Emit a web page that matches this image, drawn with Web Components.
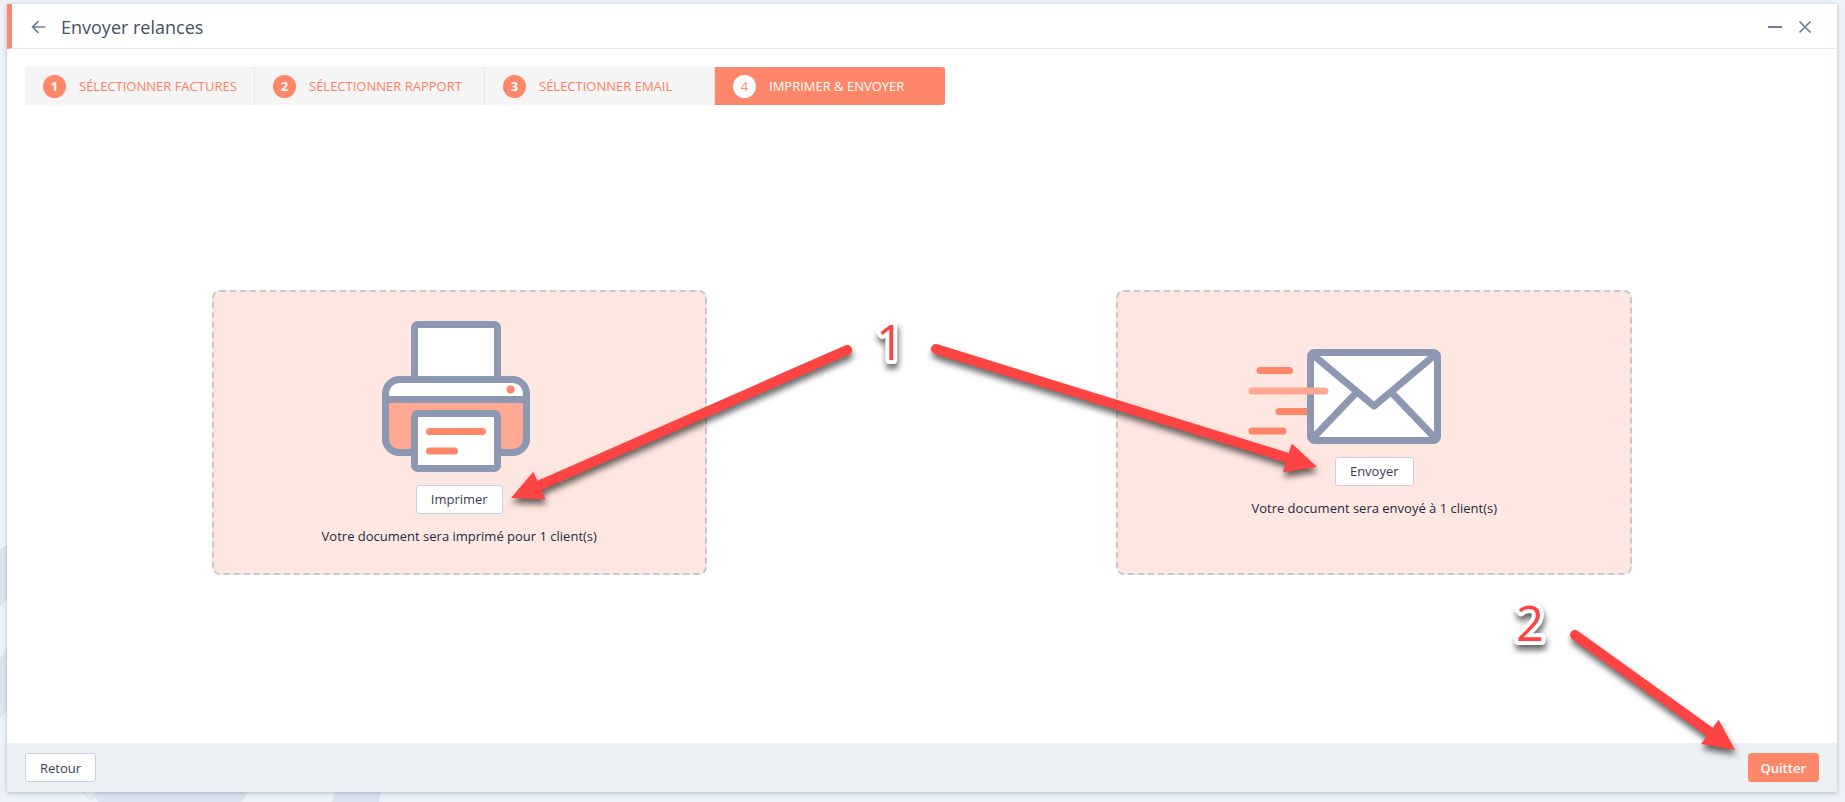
<!DOCTYPE html>
<html lang="fr">
<head>
<meta charset="UTF-8">
<title>Envoyer relances</title>
<style>
  body {
    margin: 0;
    font-family: "Open Sans", "Noto Sans", sans-serif;
    font-size: 13px;
    color: #2f3b52;
    background: #edf2fa;
  }
</style>
</head>
<body>
<relance-app></relance-app>

<script>
/**
 * Button: variants "default" and "primary"
 */
class AppButton extends HTMLElement {
  constructor() {
    super();
    this.attachShadow({ mode: 'open' });
  }

  connectedCallback() {
    this.shadowRoot.innerHTML = `
      <style>
        :host { display: block; }
        button {
          display: block;
          height: 29px;
          padding: 0 14px;
          border: 1px solid #c9d1dc;
          border-radius: 3px;
          background: #fff;
          color: #364155;
          font: 500 13px/20px "Open Sans", "Noto Sans", sans-serif;
          cursor: pointer;
        }
        :host([variant="primary"]) button {
          padding: 0 12px;
          border-color: #ff8769;
          background: #ff8769;
          color: #fff;
          font-weight: 600;
        }
      </style>
      <button type="button"><slot></slot></button>
    `;
  }
}
customElements.define('app-button', AppButton);

/**
 * Title bar
 */
class WindowHeader extends HTMLElement {
  constructor() {
    super();
    this.attachShadow({ mode: 'open' });
  }

  connectedCallback() {
    this.shadowRoot.innerHTML = `
      <style>
        :host {
          display: flex;
          align-items: center;
          box-sizing: border-box;
          height: 45px;
          padding: 2px 25px 0 19px;
          border-bottom: 1px solid #e4e6e8;
          border-left: 5px solid #ff8769;
        }
        h1 { flex: 1; margin: 0 0 0 15px; font-size: 18px; font-weight: 400; color: #445063; }
        button { display: block; padding: 0; border: 0; background: none; cursor: pointer; }
        .minimize { margin-right: 15px; }
        svg { display: block; fill: none; stroke: #6d7d96; stroke-width: 2; }
      </style>
      <button type="button" aria-label="Précédent">
        <svg width="15" height="14" viewBox="0 0 15 14"><path d="M14.5 7H1.5M7.5 1.2L1.6 7l5.9 5.8" stroke-width="1.7"/></svg>
      </button>
      <h1><slot></slot></h1>
      <button class="minimize" type="button" aria-label="Réduire">
        <svg width="15" height="14" viewBox="0 0 15 14"><path d="M0 7h14"/></svg>
      </button>
      <button type="button" aria-label="Fermer">
        <svg width="14" height="14" viewBox="0 0 14 14"><path d="M1.5 1.5l11 11M12.5 1.5l-11 11" stroke-width="1.7"/></svg>
      </button>
    `;
  }
}
customElements.define('window-header', WindowHeader);

/**
 * One step of the wizard
 */
class WizardStep extends HTMLElement {
  constructor() {
    super();
    this.attachShadow({ mode: 'open' });
  }

  connectedCallback() {
    this.shadowRoot.innerHTML = `
      <style>
        :host { display: block; width: 230px; min-width: 0; }
        button {
          display: flex;
          align-items: center;
          gap: 13px;
          width: 100%;
          height: 38px;
          padding: 0 0 0 18px;
          border: 0;
          border-right: 1px solid #e4e6e8;
          background: #f5f5f5;
          color: #ff8060;
          font: 500 13px/20px "Open Sans", "Noto Sans", sans-serif;
          white-space: nowrap;
          cursor: pointer;
        }
        .number {
          flex: none;
          width: 23px;
          border-radius: 50%;
          background: #ff8769;
          color: #fff;
          font-weight: 700;
          line-height: 23px;
          text-align: center;
        }
        :host([active]) button { border-color: #ff8769; background: #ff8769; color: #fff; }
        :host([active]) .number { background: #fff; color: #ff8769; font-weight: 500; }
      </style>
      <button type="button">
        <span class="number">${this.getAttribute('number')}</span>
        <span><slot></slot></span>
      </button>
    `;
  }
}
customElements.define('wizard-step', WizardStep);

/**
 * Dashed card: icon, action button, message
 */
class ActionCard extends HTMLElement {
  constructor() {
    super();
    this.attachShadow({ mode: 'open' });
  }

  connectedCallback() {
    this.shadowRoot.innerHTML = `
      <style>
        :host {
          display: flex;
          flex-direction: column;
          align-items: center;
          justify-content: center;
          box-sizing: border-box;
          min-height: 285px;
          padding-top: 2px;
          border: 2px dashed #c6c8ca;
          border-radius: 8px;
          background: #fee7e1;
        }
        ::slotted(svg) { display: block; margin-bottom: 13px; }
        p { margin: 12px 0 0; font-weight: 500; line-height: 20px; color: #1f2a40; }
      </style>
      <slot name="icon"></slot>
      <app-button>${this.getAttribute('action')}</app-button>
      <p><slot></slot></p>
    `;
  }
}
customElements.define('action-card', ActionCard);

/**
 * Numbered arrows laid over the window
 */
class GuideOverlay extends HTMLElement {
  constructor() {
    super();
    this.attachShadow({ mode: 'open' });
  }

  // tail (x1, y1), tip (x2, y2)
  arrow(x1, y1, x2, y2) {
    const length = Math.hypot(x2 - x1, y2 - y1);
    const angle = Math.atan2(y2 - y1, x2 - x1) * 180 / Math.PI;
    return `
      <g transform="translate(${x1} ${y1}) rotate(${angle})">
        <path d="M0 0H${length - 25}" stroke="#fe4343" stroke-width="10" stroke-linecap="round"/>
        <path d="M${length - 31} -15L${length} 0L${length - 31} 15z" fill="#fe4343"/>
      </g>
    `;
  }

  render() {
    this.shadowRoot.innerHTML = `
      <style>
        :host { position: absolute; inset: 0; pointer-events: none; }
        svg { display: block; width: 100%; height: 100%; }
        g.shadow { filter: drop-shadow(1px 5px 3px rgba(0, 0, 0, 0.6)); }
        text {
          font: 500 49px "Open Sans", "Noto Sans", sans-serif;
          fill: #fe4343;
          stroke: #fff;
          stroke-width: 8px;
          stroke-linejoin: round;
          paint-order: stroke;
          text-anchor: middle;
        }
      </style>
      <svg viewBox="0 0 1845 802">
        <g class="shadow">${this.arrow(847, 350, 511, 498)}</g>
        <g class="shadow">${this.arrow(936, 349, 1317, 467)}</g>
        <g class="shadow">${this.arrow(1575, 635, 1735, 750)}</g>
        <g class="shadow"><text x="890" y="360">1</text></g>
        <g class="shadow"><text x="1530" y="641">2</text></g>
      </svg>
    `;
  }

  connectedCallback() { this.render(); }
}
customElements.define('guide-overlay', GuideOverlay);

/**
 * Main window
 */
class RelanceApp extends HTMLElement {
  constructor() {
    super();
    this.attachShadow({ mode: 'open' });
  }

  connectedCallback() {
    this.shadowRoot.innerHTML = `
      <style>
        :host {
          display: flex;
          position: relative;
          box-sizing: border-box;
          min-height: 100vh;
          padding: 4px 8px 10px 7px;
        }
        .backdrop { position: absolute; left: 0; bottom: 0; fill: #dce3ef; }
        .window {
          display: flex;
          flex: 1;
          flex-direction: column;
          position: relative;
          background: #fff;
          box-shadow: 0 1px 4px rgba(40, 60, 90, 0.3);
        }
        nav { display: flex; align-self: flex-start; margin: 18px 18px 16px; border-radius: 3px; overflow: hidden; }
        main { display: flex; flex: 1; align-items: center; justify-content: space-around; }
        .print { flex: 0 1 495px; }
        .send { flex: 0 1 516px; }
        footer {
          display: flex;
          align-items: center;
          justify-content: space-between;
          height: 49px;
          padding: 0 18px;
          background: #edf1f6;
        }
      </style>
      <svg class="backdrop" width="400" height="272" viewBox="0 0 400 272">
        <path d="M0 19L20 8V58L0 76zM0 129L20 95V165L0 188zM82 262H248L242 272H98L95 267L90 270zM335 262H381L379 272H332z"/>
        <path d="M84 262H96L90 269z" fill="#edf1f6"/>
      </svg>
      <div class="window">
        <window-header>Envoyer relances</window-header>
        <nav>
          <wizard-step number="1">SÉLECTIONNER FACTURES</wizard-step>
          <wizard-step number="2">SÉLECTIONNER RAPPORT</wizard-step>
          <wizard-step number="3">SÉLECTIONNER EMAIL</wizard-step>
          <wizard-step number="4" active>IMPRIMER &amp; ENVOYER</wizard-step>
        </nav>
        <main>
          <action-card class="print" action="Imprimer">
            <svg slot="icon" width="154" height="151" viewBox="0 0 154 151" fill="#fff" stroke="#8c97b2" stroke-width="7">
              <rect x="32.500" y="3.500" width="83" height="70" rx="3"/>
              <rect x="3.500" y="58.500" width="141" height="73" rx="14"/>
              <path d="M3.500 78.500h141v39a14 14 0 0 1-14 14h-113a14 14 0 0 1-14-14z" fill="#ffa994"/>
              <circle cx="128.500" cy="68.500" r="4" fill="#ff8769" stroke="none"/>
              <rect x="32.500" y="92.500" width="83" height="55" rx="3"/>
              <path d="M47.500 110.500h53M47.500 130h25" stroke="#ff8769" stroke-linecap="round"/>
            </svg>
            Votre document sera imprimé pour 1 client(s)
          </action-card>
          <action-card class="send" action="Envoyer">
            <svg slot="icon" width="252" height="95" viewBox="0 0 252 95" fill="none" stroke="#8c97b2" stroke-width="7">
              <path d="M12 21.500h29.500M31 62.500h40M4 82h31" stroke="#ff8769" stroke-linecap="round"/>
              <rect x="62.500" y="3.500" width="127" height="88" rx="4" fill="#fff"/>
              <path d="M64 5l62 52 62-52M64 90l44-46M188 90l-44-46" stroke-linejoin="round"/>
              <path d="M4 42h73" stroke="#ffa994" stroke-linecap="round"/>
            </svg>
            Votre document sera envoyé à 1 client(s)
          </action-card>
        </main>
        <footer>
          <app-button>Retour</app-button>
          <app-button variant="primary">Quitter</app-button>
        </footer>
      </div>
      <guide-overlay></guide-overlay>
    `;
  }
}
customElements.define('relance-app', RelanceApp);
</script>
</body>
</html>
